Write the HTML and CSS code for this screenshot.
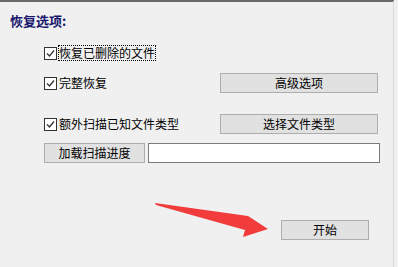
FILE: index.html
```html
<!DOCTYPE html>
<html lang="zh-CN">
<head>
    <meta charset="UTF-8">
    <meta name="viewport" content="width=device-width, initial-scale=1.0">
    <title>恢复选项</title>
    <link rel="stylesheet" href="styles.css">
</head>
<body>
    <div class="panel">
        <h1 class="title">恢复选项:</h1>

        <div class="row row-first">
            <label class="check">
                <svg class="box" width="13" height="13" viewBox="0 0 13 13"><rect x="0.5" y="0.5" width="12" height="12" fill="#fff" stroke="#333"/><polyline points="3,6.5 5.5,9 10,3.5" fill="none" stroke="#333" stroke-width="1.3"/></svg>
                <span class="focus">恢复已删除的文件</span>
            </label>
        </div>

        <div class="row row-second">
            <label class="check col-left">
                <svg class="box" width="13" height="13" viewBox="0 0 13 13"><rect x="0.5" y="0.5" width="12" height="12" fill="#fff" stroke="#333"/><polyline points="3,6.5 5.5,9 10,3.5" fill="none" stroke="#333" stroke-width="1.3"/></svg>
                <span>完整恢复</span>
            </label>
            <button class="btn btn-wide">高级选项</button>
        </div>

        <div class="row row-third">
            <label class="check col-left">
                <svg class="box" width="13" height="13" viewBox="0 0 13 13"><rect x="0.5" y="0.5" width="12" height="12" fill="#fff" stroke="#333"/><polyline points="3,6.5 5.5,9 10,3.5" fill="none" stroke="#333" stroke-width="1.3"/></svg>
                <span>额外扫描已知文件类型</span>
            </label>
            <button class="btn btn-wide">选择文件类型</button>
        </div>

        <div class="row row-fourth">
            <button class="btn btn-load">加载扫描进度</button>
            <input class="path-input" type="text">
        </div>

        <div class="row row-start">
            <button class="btn btn-start">开始</button>
        </div>

        <!-- red arrow pointing at the start button -->
        <svg class="arrow" width="398" height="267" viewBox="0 0 398 267">
            <polygon points="155,203 248,216 268,229 243,237 245,230 156,205" fill="#f23b3b"/>
        </svg>
    </div>
</body>
</html>
```

FILE: styles.css
```css
body {
    margin: 0;
    background-color: #f0f0f0;
    font-family: "Noto Sans CJK SC", "Noto Sans", sans-serif;
    font-size: 12px;
    color: #000;
}

.panel {
    position: relative;
    height: 267px;
    margin-right: 4px;
    border-top: 2px solid #6a6a6a;
    border-right: 1px solid #d8d8d8;
    box-sizing: border-box;
}

.title {
    margin: 0;
    padding: 11px 0 0 10px;
    font-size: 13px;
    line-height: 16px;
    font-weight: bold;
    color: #16166c;
}

.row {
    display: flex;
    align-items: center;
    height: 20px;
    padding-left: 44px;
}

.row-first { margin-top: 14px; }
.row-second { margin-top: 10px; }
.row-third { margin-top: 21px; }
.row-fourth { margin-top: 9px; }
.row-start {
    margin-top: 57px;
    padding-left: 281px;
}

.check {
    display: flex;
    align-items: center;
    line-height: 14px;
}

.col-left {
    width: 176px;
}

.box {
    display: block;
    margin-right: 2px;
}

.focus {
    outline: 1px dotted #000;
}

.btn {
    height: 20px;
    padding: 0;
    background-color: #e1e1e1;
    border: 1px solid #adadad;
    font-family: inherit;
    font-size: 12px;
    line-height: 16px;
    color: #000;
    box-sizing: border-box;
}

.btn-wide {
    width: 158px;
}

.btn-load {
    width: 101px;
}

.btn-start {
    width: 88px;
}

.path-input {
    width: 232px;
    height: 20px;
    margin-left: 3px;
    padding: 0 3px;
    border: 1px solid #7a7a7a;
    background-color: #fff;
    box-sizing: border-box;
}

.arrow {
    position: absolute;
    top: -2px;
    left: 0;
    pointer-events: none;
}
```
